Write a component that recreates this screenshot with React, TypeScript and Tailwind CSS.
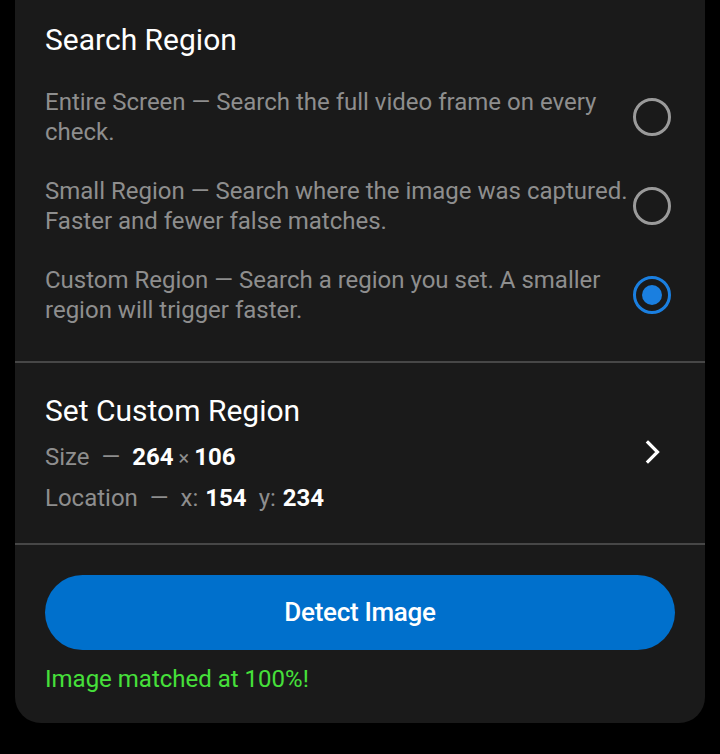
import { useState } from "react";

const OPTIONS = [
    { id: "entire", label: "Entire Screen — Search the full video frame on every check." },
    { id: "small", label: "Small Region — Search where the image was captured. Faster and fewer false matches." },
    { id: "custom", label: "Custom Region — Search a region you set. A smaller region will trigger faster." },
];

const Radio = ({ checked }: { checked: boolean }) => (
    <svg width="40" height="40" viewBox="0 0 40 40" className="shrink-0">
        <circle cx="20" cy="20" r="17.5" fill="none" stroke={checked ? "#1a7fe0" : "#9a9a9a"} strokeWidth="3" />
        {checked && <circle cx="20" cy="20" r="10" fill="#1a7fe0" />}
    </svg>
);

const App = () => {
    const [selected, setSelected] = useState("custom");

    return (
        <div className="min-h-[754px] bg-black px-[15px] font-['Roboto',sans-serif]">
            <div className="bg-[#1a1a1a] rounded-b-[26px]">
                <div className="px-[30px] pt-[22px] pb-[36px]">
                    <h2 className="text-[30px] leading-[36px] text-white">Search Region</h2>
                    <ul className="mt-[29px] flex flex-col gap-[29px]">
                        {OPTIONS.map((option) => (
                            <li key={option.id}
                                className="flex items-center gap-[2px] cursor-pointer"
                                onClick={() => setSelected(option.id)}>
                                <p className="flex-1 text-[24px] leading-[30px] text-[#8e8e8e]">{option.label}</p>
                                <div className="mr-[3px]">
                                    <Radio checked={selected === option.id} />
                                </div>
                            </li>
                        ))}
                    </ul>
                </div>
                <div className="h-[2px] bg-[#474747]" />
                <div className="flex items-center justify-between pl-[30px] pr-[44px] pt-[30px] pb-[25px]">
                    <div>
                        <h2 className="text-[30px] leading-[36px] text-white">Set Custom Region</h2>
                        <p className="mt-[8px] text-[24px] leading-[40px] text-[#8e8e8e]">
                            Size<span className="mx-[12px]">—</span>
                            <span className="font-bold text-white">264</span>
                            <span className="mx-[5px] text-[20px]">×</span>
                            <span className="font-bold text-white">106</span>
                        </p>
                        <p className="text-[24px] leading-[40px] text-[#8e8e8e]">
                            Location<span className="mx-[12px]">—</span>
                            x:<span className="ml-[7px] font-bold text-white">154</span>
                            <span className="ml-[12px]">y:</span><span className="ml-[7px] font-bold text-white">234</span>
                        </p>
                    </div>
                    <svg width="16" height="24" viewBox="0 0 16 24" className="mt-[-8px]">
                        <path d="M3 2.5 L12.5 12 L3 21.5" fill="none" stroke="white" strokeWidth="3.2" strokeLinecap="square" />
                    </svg>
                </div>
                <div className="h-[2px] bg-[#474747]" />
                <div className="px-[30px] pt-[30px] pb-[29px]">
                    <button className="w-full h-[75px] rounded-full bg-[#0070cc] text-white text-[26px] font-medium tracking-[-0.3px]">
                        Detect Image
                    </button>
                    <p className="mt-[14px] text-[24px] leading-[30px] text-[#46e03a]">Image matched at 100%!</p>
                </div>
            </div>
        </div>
    );
};

export default App;
